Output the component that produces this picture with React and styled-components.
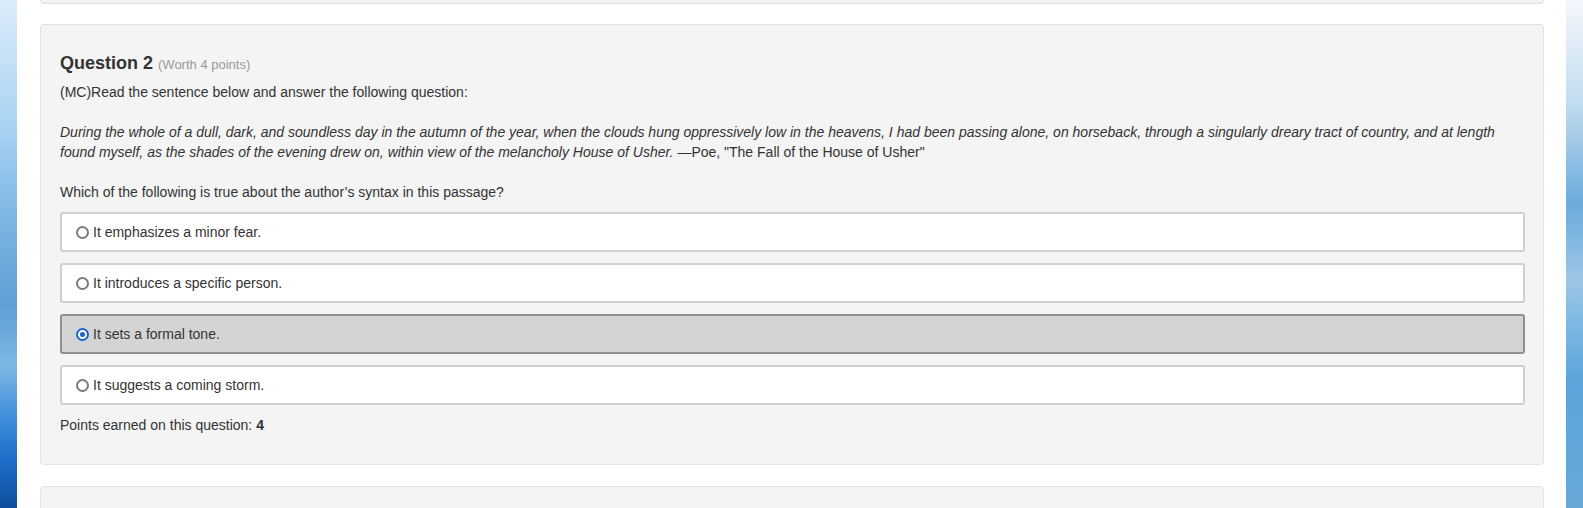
import React from 'react'
import styled, { createGlobalStyle } from 'styled-components'

const Global = createGlobalStyle`
html, body, #root {
  margin : 0 ;
  height : 100% ;
  overflow : hidden ;
}
body {
  font-family : "Liberation Sans", Arial, sans-serif ;
  font-size : 14px ;
  color : #333333 ;
  background : #ffffff ;
}
`

const Page = styled.div`
display : flex ;
height : 100% ;
`

const LeftStrip = styled.div`
width : 17px ;
flex-shrink : 0 ;
background : linear-gradient(180deg, #dcedfb 0%, #a9d3f3 25%, #78b3e2 45%, #5f9fd6 60%, #7cb8e6 72%, #3f8fdc 82%, #1f6fcc 90%, #0d4f9e 100%);
`

const RightStrip = styled.div`
width : 17px ;
flex-shrink : 0 ;
background : linear-gradient(180deg, #f4f8fc 0%, #c3dcef 20%, #6cabdc 40%, #9cc6e6 55%, #5aa5dc 75%, #66a8d8 100%);
`

const Main = styled.div`
flex : 1 ;
padding : 0 22px 0 23px ;
background : #ffffff ;
`

const Stub = styled.div`
height : 3px ;
background : #f4f4f4 ;
border : 1px solid #e3e3e3 ;
border-top : none ;
border-radius : 0 0 4px 4px ;
`

const Card = styled.div`
margin-top : 20px ;
background : #f4f4f4 ;
border : 1px solid #e3e3e3 ;
border-radius : 4px ;
padding : 27px 18px 29px 19px ;
`

const Heading = styled.h3`
margin : 0 0 6px ;
font-size : 18px ;
line-height : 22px ;
font-weight : bold ;
color : #333333 ;
`

const Worth = styled.span`
font-size : 13px ;
font-weight : normal ;
color : #999999 ;
`

const Para = styled.p`
margin : 0 0 20px ;
line-height : 20px ;
font-style : ${p => (p.$italic ? 'italic' : 'normal')} ;
`

const Plain = styled.span`
font-style : normal ;
`

const Options = styled.div`
display : flex ;
flex-direction : column ;
gap : 11px ;
margin : -10px 0 10px ;
`

const Option = styled.label`
display : flex ;
align-items : center ;
gap : 4px ;
height : 36px ;
padding : 0 14px ;
background : ${p => (p.$checked ? '#d4d4d4' : '#ffffff')} ;
border : 2px solid ${p => (p.$checked ? '#8f8f8f' : '#cfcfcf')} ;
border-radius : 3px ;
cursor : pointer ;
`

const Radio = styled.span`
box-sizing : border-box ;
width : 13px ;
height : 13px ;
border-radius : 50% ;
border : 2px solid ${p => (p.$checked ? '#1b66c9' : '#7a7a7a')} ;
background : #ffffff ;
display : flex ;
align-items : center ;
justify-content : center ;
&::after {
  content : '' ;
  width : 5px ;
  height : 5px ;
  border-radius : 50% ;
  background : ${p => (p.$checked ? '#1b66c9' : 'transparent')} ;
}
`

const Points = styled.p`
margin : 0 ;
line-height : 20px ;
`

const NextCard = styled.div`
margin-top : 21px ;
height : 40px ;
background : #f4f4f4 ;
border : 1px solid #e3e3e3 ;
border-radius : 4px ;
`

const answers = [
  'It emphasizes a minor fear.',
  'It introduces a specific person.',
  'It sets a formal tone.',
  'It suggests a coming storm.',
]

const App = () => (
  <Page>
    <Global />
    <LeftStrip />
    <Main>
      <Stub />
      <Card>
        <Heading>
          Question 2 <Worth>(Worth 4 points)</Worth>
        </Heading>
        <Para>(MC)Read the sentence below and answer the following question:</Para>
        <Para $italic>
          During the whole of a dull, dark, and soundless day in the autumn of the year, when the clouds hung oppressively low in the heavens, I had been passing alone, on horseback, through a singularly dreary tract of country, and at length found myself, as the shades of the evening drew on, within view of the melancholy House of Usher.{' '}
          <Plain>—Poe, "The Fall of the House of Usher"</Plain>
        </Para>
        <Para>Which of the following is true about the author’s syntax in this passage?</Para>
        <Options>
          {answers.map((a, i) => (
            <Option key={a} $checked={i === 2}>
              <Radio $checked={i === 2} />
              {a}
            </Option>
          ))}
        </Options>
        <Points>
          Points earned on this question: <b>4</b>
        </Points>
      </Card>
      <NextCard />
    </Main>
    <RightStrip />
  </Page>
)

export default App
